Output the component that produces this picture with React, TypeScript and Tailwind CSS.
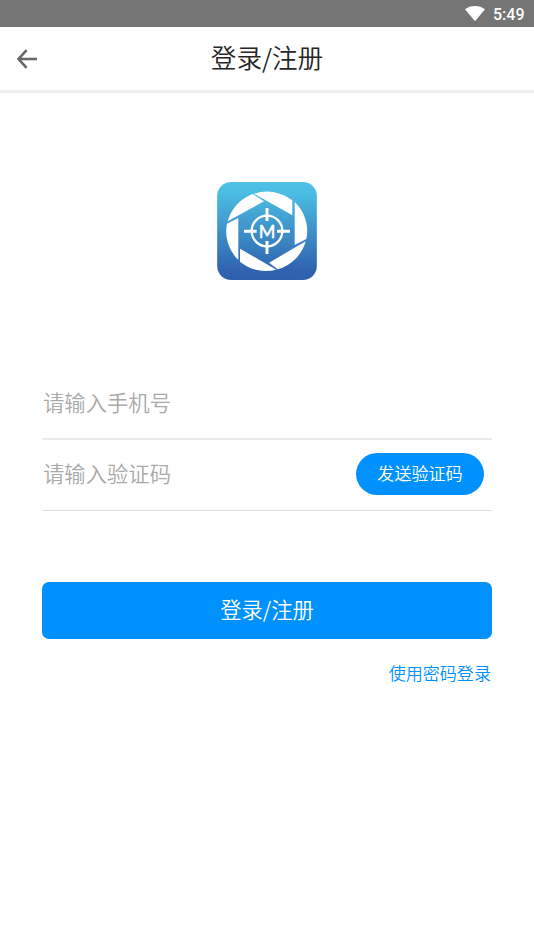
import clsx from 'clsx'

const fieldStyles =
  'min-w-0 flex-1 bg-transparent p-0 text-[21.33px] leading-8 text-gray-800 outline-none placeholder:text-[#a9a9a9]'

const StatusBar = () => (
  <div className="flex h-[27px] items-center justify-end bg-[#757575] pr-[9.5px] text-white">
    <svg width="20" height="15" viewBox="0 0 20 15" fill="currentColor" className="mr-[8px] mb-px">
      <path d="M0 3.3C2.8 1.2 6.2 0 10 0s7.2 1.2 10 3.3L10.6 14.5q-.6.7-1.2 0Z" />
    </svg>
    <span className="pt-[3px] font-[Roboto] text-[16px] leading-6 font-medium">5:49</span>
  </div>
)

const Logo = () => (
  <svg width="100" height="98" viewBox="30 30 300 294">
    <defs>
      <linearGradient id="logo-bg" x1="0" y1="0" x2="0" y2="1">
        <stop offset="0" stopColor="#4fc1e6" />
        <stop offset="0.12" stopColor="#4bbce2" />
        <stop offset="0.9" stopColor="#2f63b0" />
        <stop offset="1" stopColor="#2f60ae" />
      </linearGradient>
    </defs>
    <rect x="30.5" y="30" width="299" height="294" rx="42" fill="url(#logo-bg)" />
    {/* shutter blades */}
    <g fill="#fff">
      <path d="M137 66 171 88 62 148A122 120 0 0 1 137 66Z" />
      <path d="M141 65A122 120 0 0 1 256 85V130Z" />
      <path d="M263 90A122 120 0 0 1 298 201L263 219Z" />
      <path d="M296 208A122 120 0 0 1 212 292L186 272Z" />
      <path d="M99 230 208 293A122 120 0 0 1 99 269Z" />
      <path d="M94 138V264A122 120 0 0 1 60 155Z" />
    </g>
    {/* crosshair */}
    <g fill="none" stroke="#fff">
      <circle cx="180" cy="177" r="46" strokeWidth="7" />
      <path d="M180 108v39M180 207v39M111 178h38M210 178h39" strokeWidth="9" />
    </g>
    <text
      x="155"
      y="197"
      textLength="50"
      lengthAdjust="spacingAndGlyphs"
      fill="#fff"
      stroke="#fff"
      strokeWidth="1.5"
      strokeLinejoin="round"
      className="font-[Lato] text-[54px] font-normal"
    >
      M
    </text>
  </svg>
)

const Header = () => (
  <header className="relative flex h-[66px] items-center justify-center border-b-3 border-[#eeeeee]">
    <button type="button" className="absolute left-[17px] text-[#666666]" aria-label="返回">
      <svg width="20" height="20" viewBox="0 0 20 20" fill="none" stroke="currentColor" strokeWidth="2.6">
        <path d="M9.6 1.2 1.6 10l8 8.8M1.6 10H20" />
      </svg>
    </button>
    <h1 className="pb-[3px] text-[25.6px] leading-8 text-[#262626]">登录/注册</h1>
  </header>
)

export default function App() {
  return (
    <div
      className={clsx(
        'flex min-h-screen flex-col bg-white font-[350]',
        "font-['Noto_Sans_CJK_SC',sans-serif]",
      )}
    >
      <StatusBar />
      <Header />
      <main className="flex flex-col px-[42px]">
        <div className="flex justify-center pt-[89px]">
          <Logo />
        </div>
        <form className="mt-[88px] flex flex-col">
          <div className="flex h-[72px] items-center border-b-2 border-[#ebebeb] pb-[3px] pl-px">
            <input type="tel" placeholder="请输入手机号" className={fieldStyles} />
          </div>
          <div className="flex h-[71px] items-center border-b border-[#dedede] pr-2 pb-[2px] pl-px">
            <input type="text" placeholder="请输入验证码" className={clsx(fieldStyles, 'pb-[2px]')} />
            <button
              type="button"
              className="h-[42px] w-32 rounded-full bg-[#0091ff] pb-[2px] text-[17.07px] leading-6 text-white"
            >
              发送验证码
            </button>
          </div>
          <button
            type="button"
            className="mt-[71px] h-[57px] rounded-[7px] bg-[#0091ff] pb-[3px] text-[21.33px] leading-8 text-white"
          >
            登录/注册
          </button>
          <button type="button" className="mt-[22px] mr-px self-end text-[17.07px] leading-6 text-[#0091ff]">
            使用密码登录
          </button>
        </form>
      </main>
    </div>
  )
}
